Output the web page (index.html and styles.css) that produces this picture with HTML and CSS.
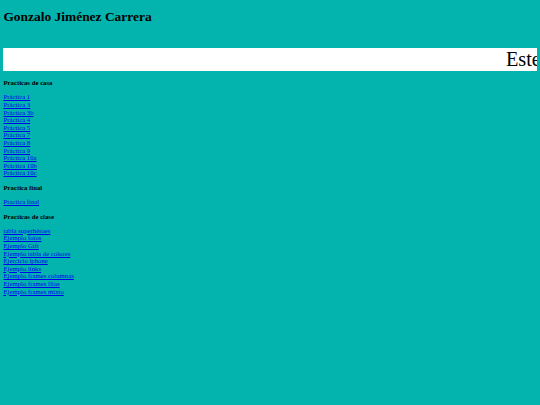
FILE: index.html
```html
<!DOCTYPE html>
<html lang="es">
<head>
    <meta charset="UTF-8">
    <meta name="viewport" content="width=device-width, initial-scale=1.0">
    <title>Gonzalo Jiménez Carrera</title>
    <link rel="stylesheet" href="styles.css">
</head>
<body>

    <h1 class="title">Gonzalo Jiménez Carrera</h1>

    <!-- banner -->
    <div class="banner">
        <span class="banner-text">Este es mi sitio</span>
    </div>

    <h4 class="section">Practicas de casa</h4>
    <div class="links">
        <a href="#">Práctica 1</a>
        <a href="#">Práctica 3</a>
        <a href="#">Práctica 3b</a>
        <a href="#">Práctica 4</a>
        <a href="#">Práctica 5</a>
        <a href="#">Práctica 7</a>
        <a href="#">Práctica 8</a>
        <a href="#">Práctica 9</a>
        <a href="#">Práctica 10a</a>
        <a href="#">Práctica 10b</a>
        <a href="#">Práctica 10c</a>
    </div>

    <h4 class="section">Practica final</h4>
    <div class="links">
        <a href="#">Practica final</a>
    </div>

    <h4 class="section">Practicas de clase</h4>
    <div class="links">
        <a href="#">tabla superhéroes</a>
        <a href="#">Ejemplo fotos</a>
        <a href="#">Ejemplo Gift</a>
        <a href="#">Ejemplo tabla de colores</a>
        <a href="#">Ejercicio iphone</a>
        <a href="#">Ejemplo links</a>
        <a href="#">Ejemplo frames columnas</a>
        <a href="#">Ejemplo frames filas</a>
        <a href="#">Ejemplo frames mixto</a>
    </div>

</body>
</html>
```

FILE: styles.css
```css
body {
    margin: 0;
    padding: 0 3.4px;
    min-height: 405px;
    box-sizing: border-box;
    overflow: hidden;
    background-color: #02b3ae;
    color: #000;
    font-family: "Liberation Serif", "Times New Roman", serif;
    font-size: 6.75px;
}

.title {
    margin: 0;
    padding-top: 9px;
    font-size: 13.45px;
    line-height: 16px;
    font-weight: bold;
}

/* white strip, text runs off the right side */
.banner {
    margin-top: 23px;
    margin-bottom: 8px;
    height: 23px;
    background-color: #fff;
    overflow: hidden;
    white-space: nowrap;
    padding-left: 502.5px;
    font-size: 20.25px;
    line-height: 23px;
}

.section {
    margin: 6.8px 0;
    font-size: 6.75px;
    line-height: 7.6px;
    font-weight: bold;
}

.links {
    display: flex;
    flex-direction: column;
    align-items: flex-start;
    line-height: 7.6px;
}

.links a {
    color: #0000ee;
}
```
